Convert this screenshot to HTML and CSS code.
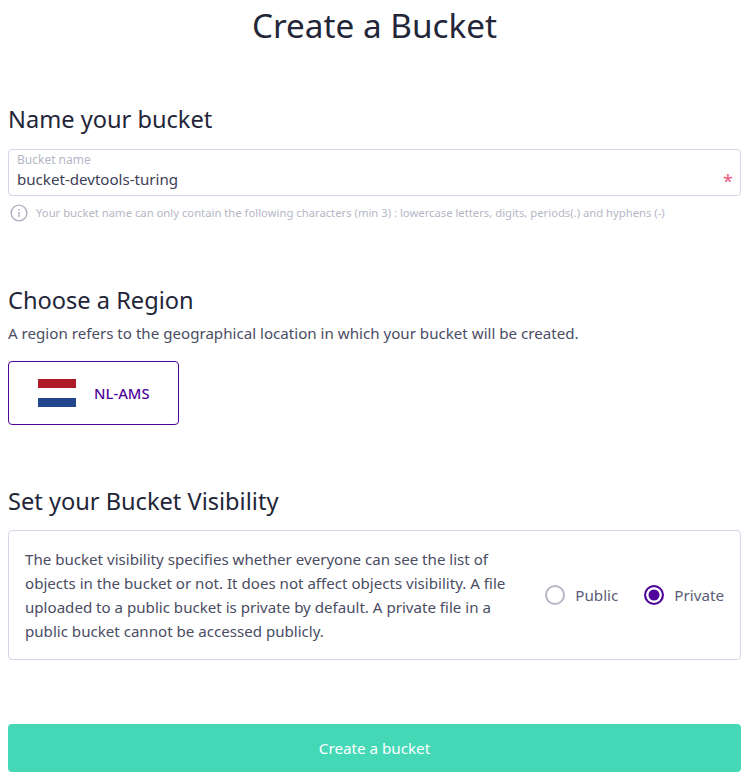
FILE: index.html
```html
<!DOCTYPE html>
<html>
<head>
    <meta charset="UTF-8">
    <title>Create a Bucket</title>
    <link rel="stylesheet" href="styles.css">
</head>
<body>
    <h1 class="page-title">Create a Bucket</h1>

    <section class="name-section">
        <h2>Name your bucket</h2>
        <div class="field">
            <label class="field-label">Bucket name</label>
            <div class="field-value">bucket-devtools-turing</div>
            <span class="required">*</span>
        </div>
        <div class="help">
            <svg viewBox="0 0 18 18">
                <circle cx="9" cy="9" r="7.9"/>
                <path d="M9 8v5M9 5v1.6"/>
            </svg>
            Your bucket name can only contain the following characters (min 3) : lowercase letters, digits, periods(.) and hyphens (-)
        </div>
    </section>

    <section class="region-section">
        <h2>Choose a Region</h2>
        <p class="description">A region refers to the geographical location in which your bucket will be created.</p>
        <div class="region-card">
            <div class="flag"><span class="red"></span><span class="white"></span><span class="blue"></span></div>
            <span class="region-name">NL-AMS</span>
        </div>
    </section>

    <section class="visibility-section">
        <h2>Set your Bucket Visibility</h2>
        <div class="visibility-box">
            <p>The bucket visibility specifies whether everyone can see the list of objects in the bucket or not. It does not affect objects visibility. A file uploaded to a public bucket is private by default. A private file in a public bucket cannot be accessed publicly.</p>
            <div class="radios">
                <div class="radio"><span class="dot"></span>Public</div>
                <div class="radio"><span class="dot checked"></span>Private</div>
            </div>
        </div>
    </section>

    <button class="submit">Create a bucket</button>
</body>
</html>
```

FILE: styles.css
```css
* { margin: 0; padding: 0; box-sizing: border-box; }
body {
    background: #fff;
    color: #222638;
    font-family: "Noto Sans", Roboto, sans-serif;
    padding: 0 8px;
    height: 772px;
    overflow: hidden;
}
.page-title {
    font-size: 33.3px;
    font-weight: 400;
    line-height: 50px;
    text-align: center;
}
h2 {
    font-size: 23.6px;
    font-weight: 400;
    line-height: 32px;
}
.name-section { margin-top: 53px; }
.field {
    position: relative;
    height: 47px;
    margin-top: 14px;
    border: 1px solid #d4d7e8;
    border-radius: 4px;
    padding: 2px 8px;
}
.field-label {
    display: block;
    font-size: 12px;
    line-height: 16px;
    color: #b5b7c6;
}
.field-value {
    font-size: 15.1px;
    line-height: 22px;
    color: #3d4058;
}
.required {
    position: absolute;
    right: 7px;
    top: 20px;
    color: #f0567f;
    font-size: 18px;
    line-height: 22px;
}
.help {
    display: flex;
    align-items: center;
    gap: 8px;
    margin-top: 8px;
    padding-left: 2px;
    font-size: 11.27px;
    line-height: 18px;
    color: #b5b7c6;
    white-space: nowrap;
}
.help svg {
    width: 18px;
    height: 18px;
    fill: none;
    stroke: #adb0c0;
    stroke-width: 1.4;
}
.region-section { margin-top: 62px; }
.description {
    font-size: 15.13px;
    line-height: 24px;
    margin-top: 5px;
    color: #4a4d63;
}
.region-card {
    display: flex;
    align-items: center;
    gap: 18px;
    width: 171px;
    height: 64px;
    margin-top: 16px;
    padding-left: 29px;
    border: 1px solid #4f0599;
    border-radius: 4px;
}
.flag { display: flex; flex-direction: column; width: 38px; height: 28px; }
.flag span { flex: 1; }
.flag .red { background: #ae1c28; }
.flag .white { background: #fff; }
.flag .blue { background: #21468b; }
.region-name {
    font-size: 14.8px;
    font-weight: 500;
    color: #4f0599;
}
.visibility-section { margin-top: 60px; }
.visibility-box {
    display: flex;
    align-items: center;
    justify-content: space-between;
    height: 130px;
    margin-top: 13px;
    padding: 0 16px;
    border: 1px solid #d4d7e8;
    border-radius: 4px;
}
.visibility-box p {
    width: 490px;
    font-size: 15.1px;
    line-height: 24px;
    color: #4a4d63;
}
.radios { display: flex; gap: 26px; }
.radio {
    display: flex;
    align-items: center;
    gap: 10px;
    font-size: 15.2px;
    color: #5a5d75;
}
.dot {
    width: 20px;
    height: 20px;
    border: 2px solid #b5b7c6;
    border-radius: 50%;
}
.dot.checked {
    border-color: #4f0599;
    background: #4f0599;
    box-shadow: inset 0 0 0 2.5px #fff;
}
.submit {
    display: block;
    width: 100%;
    height: 48px;
    margin-top: 64px;
    border: none;
    border-radius: 4px;
    background: #45d8b6;
    color: #fff;
    font-family: inherit;
    font-size: 15.2px;
}
```
